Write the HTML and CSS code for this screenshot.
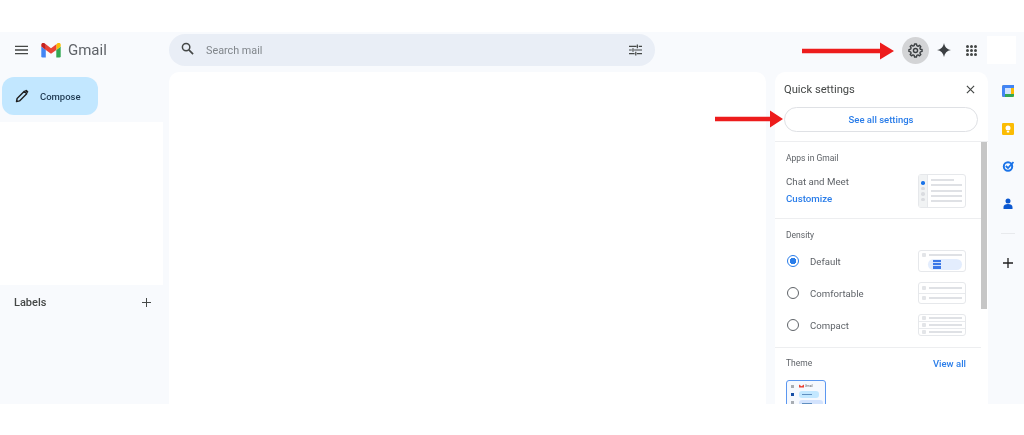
FILE: index.html
```html
<!DOCTYPE html>
<html lang="en">
<head>
  <meta charset="UTF-8" />
  <title>Gmail quick settings</title>
  <link rel="stylesheet" href="styles.css">
</head>
<body>
  <div class="app">
    <header class="topbar">
      <div class="brand">
        <svg class="menu-icon" viewBox="0 0 14 10"><path d="M0 1h14M0 5h14M0 9h14" stroke="#444746" stroke-width="1.400"/></svg>
        <svg class="gmail-logo" viewBox="0 0 22 17">
          <path d="M1.500 16.500h3.600V7.800L0 4v11a1.500 1.500 0 0 0 1.500 1.500z" fill="#4285f4"/>
          <path d="M17 16.500h3.500A1.500 1.500 0 0 0 22 15V4l-5 3.800z" fill="#34a853"/>
          <path d="M17 1.500v6.300L22 4V2c0-1.800-2.100-2.900-3.600-1.700z" fill="#fbbc04"/>
          <path d="M5.100 7.800V1.500L11 6l6-4.500v6.300L11 12.300z" fill="#ea4335"/>
          <path d="M0 2v2l5.100 3.800V1.500L3.600.3C2.100-.9 0 .2 0 2z" fill="#c5221f"/>
        </svg>
        <span class="gmail-word">Gmail</span>
      </div>
      <div class="search">
        <svg class="search-icon" viewBox="0 0 14 14"><circle cx="5.500" cy="5.500" r="4" fill="none" stroke="#444746" stroke-width="1.600"/><path d="M8.500 8.500l4.500 4.500" stroke="#444746" stroke-width="1.800"/></svg>
        <span class="search-text">Search mail</span>
        <svg class="tune-icon" viewBox="0 0 14 12"><path d="M0 2h8M10.500 2H14M0 6h3M5.500 6H14M0 10h6M8.500 10H14M9 0v4M4.300 4v4M7.300 8v4" stroke="#444746" stroke-width="1.300" fill="none"/></svg>
      </div>
      <div class="top-actions">
        <div class="gear-btn">
          <svg class="gear-icon" viewBox="0 0 16 16"><path d="M7 1h2l.4 1.900 1.300.6 1.600-1 1.400 1.400-1 1.600.6 1.300L15 7v2l-1.700.4-.6 1.300 1 1.600-1.400 1.400-1.600-1-1.300.6L9 15H7l-.4-1.700-1.300-.6-1.600 1-1.400-1.400 1-1.600-.6-1.300L1 9V7l1.700-.4.6-1.300-1-1.600 1.400-1.400 1.600 1 1.300-.6z" fill="none" stroke="#3c4043" stroke-width="1.500" stroke-linejoin="round"/><circle cx="8" cy="8" r="2.200" fill="none" stroke="#3c4043" stroke-width="1.500"/></svg>
        </div>
        <svg class="spark-icon" viewBox="0 0 14 14"><path d="M7 0c.6 3.800 3 6.400 7 7-4 .6-6.400 3.200-7 7-.6-3.800-3-6.400-7-7 4-.6 6.400-3.200 7-7z" fill="#3c4043"/></svg>
        <div class="apps-grid">
          <i></i><i></i><i></i><i></i><i></i><i></i><i></i><i></i><i></i>
        </div>
        <div class="avatar-blank"></div>
      </div>
    </header>

    <div class="content">
      <aside class="sidebar">
        <button class="compose">
          <svg class="pencil" viewBox="0 0 14 14"><path d="M1.500 12.500l.6-3L9.300 2.300l2.400 2.400-7.200 7.200z" fill="none" stroke="#1f1f1f" stroke-width="1.400" stroke-linejoin="round"/><path d="M9.800 1.800l.9-.9a.8.8 0 0 1 1.100 0l1.300 1.300a.8.800 0 0 1 0 1.100l-.9.900z" fill="#1f1f1f"/></svg>
          Compose
        </button>
        <div class="folders"></div>
        <div class="labels">
          <span>Labels</span>
          <svg class="plus-small" viewBox="0 0 10 10"><path d="M5 0v10M0 5h10" stroke="#444746" stroke-width="1.100"/></svg>
        </div>
      </aside>

      <main class="mail-list"></main>

      <section class="quick">
        <div class="quick-head">
          <div class="quick-title">
            <span>Quick settings</span>
            <svg class="close-icon" viewBox="0 0 10 10"><path d="M1 1l8 8M9 1l-8 8" stroke="#444746" stroke-width="1.300"/></svg>
          </div>
          <button class="see-all">See all settings</button>
        </div>
        <div class="quick-scroll">
          <div class="quick-body">
            <div class="block block-apps">
              <h4>Apps in Gmail</h4>
              <div class="apps-row">
                <div class="apps-text">
                  <div class="chat-label">Chat and Meet</div>
                  <div class="customize">Customize</div>
                </div>
                <div class="thumb thumb-chat">
                  <div class="chat-rail"><b class="on"></b><b></b><b></b><b></b></div>
                  <div class="chat-lines"><u class="short"></u><u></u><u></u><u></u><u></u></div>
                </div>
              </div>
            </div>
            <div class="block block-density">
              <h4>Density</h4>
              <div class="density-row">
                <span class="radio checked"></span><span class="density-name">Default</span>
                <div class="thumb thumb-default">
                  <div class="thumb-line"><s></s><u></u></div>
                  <div class="pill"><em></em></div>
                </div>
              </div>
              <div class="density-row">
                <span class="radio"></span><span class="density-name">Comfortable</span>
                <div class="thumb thumb-rows">
                  <div class="thumb-line"><s></s><u></u></div>
                  <div class="thumb-line"><s></s><u></u></div>
                </div>
              </div>
              <div class="density-row">
                <span class="radio"></span><span class="density-name">Compact</span>
                <div class="thumb thumb-rows">
                  <div class="thumb-line"><s></s><u></u></div>
                  <div class="thumb-line"><s></s><u></u></div>
                  <div class="thumb-line"><s></s><u></u></div>
                </div>
              </div>
            </div>
            <div class="block block-theme">
              <div class="theme-head"><h4>Theme</h4><span class="view-all">View all</span></div>
              <div class="theme-thumb">
                <div class="theme-rail"><b></b><b class="dark"></b><b></b></div>
                <div class="theme-main">
                  <div class="theme-logo"><svg viewBox="0 0 22 17"><path d="M0 2l11 8 11-8v13H0z" fill="#ea4335"/></svg><span>Gmail</span></div>
                  <div class="theme-pill"><i></i></div>
                  <div class="theme-pill alt"><i></i></div>
                </div>
              </div>
            </div>
          </div>
          <div class="scrollbar"></div>
        </div>
      </section>

      <nav class="rail">
        <svg class="rail-icon" viewBox="0 0 12 12"><rect width="12" height="12" rx="1.500" fill="#fbbc04"/><path d="M0 1.500A1.500 1.500 0 0 1 1.500 0H12v3H3v9H1.500A1.500 1.500 0 0 1 0 10.500z" fill="#4285f4"/><path d="M3 9h9v1.500a1.500 1.500 0 0 1-1.500 1.500H3z" fill="#34a853"/><rect x="3" y="3" width="6" height="6" fill="#d2e3fc"/></svg>
        <svg class="rail-icon" viewBox="0 0 12 12"><rect width="12" height="12" rx="1.200" fill="#fbbc04"/><circle cx="6" cy="5" r="2.500" fill="#fff"/><rect x="4.800" y="8" width="2.400" height="1.500" fill="#fff"/></svg>
        <svg class="rail-icon" viewBox="0 0 12 12"><circle cx="6" cy="6.500" r="4.200" fill="none" stroke="#1a73e8" stroke-width="2"/><path d="M3.800 6l2.200 2 5.500-6" fill="none" stroke="#1a73e8" stroke-width="1.800"/></svg>
        <svg class="rail-icon" viewBox="0 0 12 12"><circle cx="6" cy="3" r="2.500" fill="#0b57d0"/><path d="M1.500 11V9c0-1.800 2-3 4.500-3s4.500 1.200 4.500 3v2z" fill="#0b57d0"/></svg>
        <div class="rail-rule"></div>
        <svg class="rail-plus" viewBox="0 0 10 10"><path d="M5 0v10M0 5h10" stroke="#1f1f1f" stroke-width="1.300"/></svg>
      </nav>
    </div>
  </div>

  <!-- annotation arrows on top of the screenshot -->
  <svg class="arrow arrow-gear" viewBox="0 0 92 18"><path d="M0 6.700h78V.5L92 9 78 17.500v-6.200H0z" fill="#ed1c1c"/></svg>
  <svg class="arrow arrow-see" viewBox="0 0 68 18"><path d="M0 6.700h55V.5L68 9 55 17.500v-6.200H0z" fill="#ed1c1c"/></svg>
</body>
</html>
```

FILE: styles.css
```css
* {
  box-sizing: border-box;
}

html, body {
  height: 100%;
}

body {
  margin: 0;
  background: #fff;
  font-family: 'Roboto', 'Liberation Sans', sans-serif;
  color: #444746;
  overflow: hidden;
  position: relative;
}

.app {
  margin-top: 32px;
  height: 372px;
  background: #f8fafd;
  display: flex;
  flex-direction: column;
  overflow: hidden;
  filter: blur(0.5px);
}

/* top bar */
.topbar {
  height: 40px;
  flex: none;
  display: flex;
  align-items: center;
  padding-bottom: 4px;
}

.brand {
  width: 169px;
  flex: none;
  display: flex;
  align-items: center;
  padding-left: 15px;
}

.menu-icon {
  width: 13px;
  height: 10px;
}

.gmail-logo {
  width: 20px;
  height: 15px;
  margin-left: 13px;
}

.gmail-word {
  font-size: 15px;
  margin-left: 7px;
  color: #5f6368;
}

.search {
  width: 486px;
  height: 32px;
  flex: none;
  border-radius: 16px;
  background: #e9eef6;
  display: flex;
  align-items: center;
  padding: 0 13px 0 12px;
}

.search-icon {
  width: 13px;
  height: 13px;
  margin-top: -3px;
}

.search-text {
  font-size: 10.800px;
  margin-left: 12px;
  color: #80868b;
  flex: 1;
}

.tune-icon {
  width: 13px;
  height: 12px;
}

.top-actions {
  flex: 1;
  display: flex;
  align-items: center;
  justify-content: flex-end;
  padding-right: 8px;
}

.gear-btn {
  width: 27px;
  height: 27px;
  border-radius: 50%;
  background: #d3d4d6;
  display: flex;
  align-items: center;
  justify-content: center;
}

.gear-icon {
  width: 15px;
  height: 15px;
}

.spark-icon {
  width: 14px;
  height: 14px;
  margin-left: 8px;
}

.apps-grid {
  width: 11px;
  height: 11px;
  margin-left: 15px;
  display: grid;
  grid-template-columns: repeat(3, 3px);
  gap: 1px;
}

.apps-grid i {
  background: #444746;
  border-radius: 50%;
}

.avatar-blank {
  width: 29px;
  height: 28px;
  margin-left: 10px;
  background: #fff;
}

/* main row */
.content {
  flex: 1;
  display: flex;
  min-height: 0;
}

.sidebar {
  width: 169px;
  flex: none;
  display: flex;
  flex-direction: column;
  padding-top: 5px;
}

.compose {
  width: 96px;
  height: 38px;
  margin-left: 2px;
  border: none;
  border-radius: 12px;
  background: #c2e7ff;
  color: #1f3a52;
  font-family: inherit;
  font-size: 9.500px;
  font-weight: 500;
  display: flex;
  align-items: center;
  padding: 0 0 0 13px;
  gap: 11px;
}

.pencil {
  width: 14px;
  height: 14px;
}

.folders {
  width: 163px;
  height: 163px;
  margin-top: 7px;
  background: #fff;
}

.labels {
  width: 163px;
  height: 34px;
  display: flex;
  align-items: center;
  justify-content: space-between;
  padding: 0 12px 0 14px;
  font-size: 11px;
  font-weight: 500;
}

.plus-small {
  width: 9px;
  height: 9px;
}

.mail-list {
  width: 597px;
  flex: none;
  background: #fff;
  border-radius: 10px 10px 0 0;
}

/* quick settings panel */
.quick {
  width: 213px;
  flex: none;
  margin-left: 9px;
  background: #fff;
  border-radius: 10px 10px 0 0;
  display: flex;
  flex-direction: column;
  min-height: 0;
}

.quick-head {
  height: 70px;
  flex: none;
  padding: 10px 10px 0 9px;
  border-bottom: 1px solid #edeef0;
}

.quick-title {
  display: flex;
  align-items: center;
  justify-content: space-between;
  padding-right: 3px;
  height: 14px;
  font-size: 11.200px;
}

.close-icon {
  width: 9px;
  height: 9px;
}

.see-all {
  width: 194px;
  height: 25px;
  margin-top: 11px;
  border: 1px solid #dfe1e5;
  border-radius: 13px;
  background: #fff;
  color: #2a7de9;
  font-family: inherit;
  font-size: 9.500px;
  font-weight: 500;
}

.quick-scroll {
  flex: 1;
  display: flex;
  min-height: 0;
}

.quick-body {
  width: 206px;
  flex: none;
  overflow: hidden;
}

.scrollbar {
  width: 6px;
  height: 167px;
  background: #c6c6c6;
}

.block {
  border-bottom: 1px solid #edeef0;
  padding: 0 0 0 11px;
}

.block h4 {
  margin: 0;
  font-size: 8.500px;
  font-weight: 400;
  line-height: 10px;
  color: #5f6368;
}

.block-apps {
  height: 77px;
  padding-top: 11px;
}

.apps-row {
  display: flex;
  justify-content: space-between;
  padding-right: 15px;
  margin-top: 11px;
}

.apps-text {
  padding-top: 1px;
}

.chat-label {
  font-size: 9.700px;
  line-height: 14px;
  color: #5f6368;
}

.customize {
  font-size: 9.700px;
  line-height: 14px;
  margin-top: 3px;
  font-weight: 500;
  color: #2a7de9;
}

.thumb {
  width: 48px;
  border: 1px solid #e6e8eb;
  border-radius: 3px;
  background: #fff;
  flex: none;
}

.thumb u {
  display: block;
  height: 2px;
  background: #dfe1e5;
}

.thumb-chat {
  height: 34px;
  display: flex;
}

.chat-rail {
  width: 9px;
  background: #f1f3f4;
  border-right: 1px solid #e6e8eb;
  display: flex;
  flex-direction: column;
  align-items: center;
  gap: 2px;
  padding-top: 6px;
}

.chat-rail b {
  width: 3.500px;
  height: 3.500px;
  border-radius: 50%;
  background: #dadce0;
}

.chat-rail b.on {
  background: #1a73e8;
}

.chat-lines {
  flex: 1;
  padding: 4px 3px 0 3px;
}

.chat-lines u {
  margin-bottom: 3.300px;
}

.chat-lines u.short {
  width: 23px;
}

.block-density {
  height: 129px;
  padding-top: 11px;
}

.density-row {
  height: 22px;
  margin-top: 10px;
  display: flex;
  align-items: center;
  padding-right: 15px;
}

.radio {
  width: 12px;
  height: 12px;
  border: 1.500px solid #5f6368;
  border-radius: 50%;
  margin-left: 1px;
  flex: none;
}

.radio.checked {
  border-color: #2a7de9;
  background: radial-gradient(circle, #2a7de9 3px, #fff 3.500px);
}

.density-name {
  flex: 1;
  font-size: 9.600px;
  margin-left: 11px;
  color: #5f6368;
}

.thumb-line {
  display: flex;
  align-items: center;
  flex: 1;
  padding: 0 3px;
  gap: 3px;
  border-bottom: 1px solid #e8eaed;
}

.thumb-line:last-child {
  border-bottom: none;
}

.thumb-line s {
  width: 4px;
  height: 4px;
  background: #e3e5e8;
  border-radius: 1px;
}

.thumb-line u {
  flex: 1;
}

.thumb-rows {
  height: 22px;
  display: flex;
  flex-direction: column;
}

.thumb-default {
  height: 22px;
}

.thumb-default .thumb-line {
  height: 7px;
  border-bottom: none;
  flex: none;
}

.pill {
  width: 34px;
  height: 11px;
  margin-left: 9px;
  margin-top: 1px;
  border-radius: 6px;
  background: #e3edfd;
  padding: 1px 0 0 5px;
}

.pill em {
  display: block;
  width: 8px;
  height: 9px;
  background: linear-gradient(#3b78e7 25%, #cfe0fb 25% 37%, #3b78e7 37% 55%, #cfe0fb 55% 67%, #3b78e7 67%);
}

.block-theme {
  border-bottom: none;
  padding-top: 9px;
  padding-right: 15px;
}

.theme-head {
  display: flex;
  align-items: center;
  justify-content: space-between;
  height: 12px;
}

.view-all {
  font-size: 9.500px;
  font-weight: 500;
  color: #2a7de9;
}

.theme-thumb {
  width: 40px;
  height: 32px;
  margin-top: 11px;
  border: 1.500px solid #5b97f0;
  border-radius: 3px;
  display: flex;
  background: #f6f9fe;
}

.theme-rail {
  width: 11px;
  display: flex;
  flex-direction: column;
  align-items: center;
  gap: 5px;
  padding-top: 4px;
}

.theme-rail b {
  width: 3px;
  height: 3px;
  background: #a8adb3;
}

.theme-rail b.dark {
  background: #174ea6;
}

.theme-main {
  flex: 1;
  padding: 2px 2px 0 1px;
}

.theme-logo {
  display: flex;
  align-items: center;
  gap: 1px;
  height: 6px;
  font-size: 3px;
  color: #5f6368;
}

.theme-logo svg {
  width: 5px;
  height: 4px;
}

.theme-pill {
  height: 7px;
  margin-top: 2px;
  width: 20px;
  border-radius: 3px;
  background: #c2e7ff;
  display: flex;
  align-items: center;
  padding-left: 3px;
}

.theme-pill i {
  width: 10px;
  height: 1.500px;
  background: #5f8fc0;
}

.theme-pill.alt {
  background: #d3e3fd;
  width: 24px;
}

/* right rail */
.rail {
  flex: 1;
  display: flex;
  flex-direction: column;
  align-items: center;
  padding: 13px 0 0 4px;
}

.rail-icon {
  width: 12px;
  height: 12px;
  flex: none;
  margin-bottom: 25.500px;
}

.rail-rule {
  width: 14px;
  height: 1px;
  background: #e8eaed;
  margin-top: -2px;
}

.rail-plus {
  width: 10px;
  height: 10px;
  margin-top: 24px;
}

/* annotation arrows */
.arrow {
  position: absolute;
  height: 18px;
}

.arrow-gear {
  left: 802px;
  top: 42px;
  width: 92px;
}

.arrow-see {
  left: 715px;
  top: 110px;
  width: 68px;
}
```
